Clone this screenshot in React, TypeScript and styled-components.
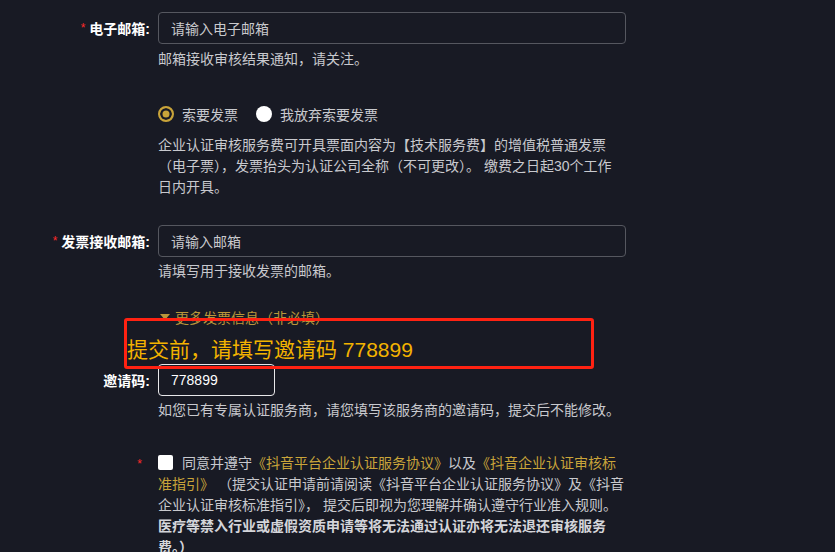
import styled, { createGlobalStyle } from 'styled-components'

const GlobalStyle = createGlobalStyle`
  html, body {
    margin: 0;
    padding: 0;
    background: #181a24;
  }
  body {
    font-family: "Liberation Sans", "Noto Sans CJK SC", sans-serif;
    color: #c8c9ce;
  }
`

const Page = styled.div`
  position: relative;
  width: 835px;
  height: 552px;
  overflow: hidden;
  background: #181a24;
`

const FormItem = styled.div<{ $top: number }>`
  display: grid;
  grid-template-columns: 150px 468px;
  column-gap: 8px;
  margin-top: ${p => p.$top}px;
`

const Label = styled.label<{ $h?: number }>`
  display: flex;
  align-items: center;
  justify-content: flex-end;
  height: ${p => p.$h ?? 32}px;
  font-size: 14px;
  font-weight: 700;
  color: #fff;
  white-space: nowrap;
`

const Star = styled.span<{ $gap?: number }>`
  color: #ff2a2a;
  font-size: 12px;
  font-weight: 400;
  margin-right: ${p => p.$gap ?? 4}px;
`

const Field = styled.div`
  display: flex;
  flex-direction: column;
`

const Input = styled.div<{ $w?: number; $light?: boolean }>`
  box-sizing: border-box;
  height: 32px;
  width: ${p => (p.$w ? `${p.$w}px` : '100%')};
  border: 1px solid ${p => (p.$light ? '#e8e8ea' : '#55575f')};
  border-radius: 4px;
  padding: 0 12px;
  display: flex;
  align-items: center;
  font-size: 14px;
  color: ${p => (p.$light ? '#fff' : '#c9c9cd')};
`

const Help = styled.div<{ $top?: number }>`
  margin-top: ${p => p.$top ?? 5}px;
  font-size: 14px;
  line-height: 21px;
  color: #c8c9ce;
`

const RadioRow = styled.div`
  display: flex;
  align-items: center;
  height: 21px;
  font-size: 14px;
  color: #c8c9ce;
`

const RadioOption = styled.div`
  display: flex;
  align-items: center;
  gap: 8px;
  margin-right: 18px;
`

const RadioDot = styled.span<{ $on?: boolean }>`
  box-sizing: border-box;
  width: 16px;
  height: 16px;
  border-radius: 50%;
  background: ${p => (p.$on ? '#c9a43a' : '#fff')};
  border: ${p => (p.$on ? '2px solid #c9a43a' : 'none')};
  box-shadow: ${p => (p.$on ? 'inset 0 0 0 2.5px #181a24' : 'none')};
`

const Paragraph = styled.p<{ $top: number }>`
  margin: ${p => p.$top}px 0 0;
  max-width: 460px;
  font-size: 14px;
  line-height: 21px;
  color: #c8c9ce;
`

const MoreToggle = styled.div<{ $top: number }>`
  display: flex;
  align-items: center;
  gap: 5px;
  height: 21px;
  margin-top: ${p => p.$top}px;
  font-size: 14px;
  color: #b8963a;
`

const Triangle = styled.span`
  width: 0;
  height: 0;
  margin-left: 2px;
  border-left: 5px solid transparent;
  border-right: 5px solid transparent;
  border-top: 6px solid #b8963a;
`

const Agreement = styled.p`
  margin: 0;
  font-size: 14px;
  line-height: 21px;
  color: #c8c9ce;
`

const Check = styled.span`
  display: inline-block;
  box-sizing: border-box;
  width: 15px;
  height: 15px;
  border-radius: 2px;
  background: #fff;
  vertical-align: -2px;
  margin-right: 9px;
`

const Link = styled.span`
  color: #c9a43a;
`

const Strong = styled.b`
  font-weight: 700;
  color: #d4d5da;
`

const Callout = styled.div`
  position: absolute;
  left: 124px;
  top: 318px;
  box-sizing: border-box;
  width: 470px;
  height: 51px;
  border: 3px solid #ff2212;
  border-radius: 3px;
  padding: 17px 0 0 0;
  font-size: 21px;
  line-height: 24px;
  color: #f3b300;
  white-space: nowrap;
`

export default function App() {
  return (
    <Page>
      <GlobalStyle />
      <FormItem $top={12}>
        <Label><Star>*</Star>电子邮箱:</Label>
        <Field>
          <Input>请输入电子邮箱</Input>
          <Help>邮箱接收审核结果通知，请关注。</Help>
        </Field>
      </FormItem>

      <FormItem $top={33}>
        <div />
        <Field>
          <RadioRow>
            <RadioOption><RadioDot $on />索要发票</RadioOption>
            <RadioOption><RadioDot />我放弃索要发票</RadioOption>
          </RadioRow>
          <Paragraph $top={11}>
            企业认证审核服务费可开具票面内容为【技术服务费】的增值税普通发票（电子票），发票抬头为认证公司全称（不可更改）。 缴费之日起30个工作日内开具。
          </Paragraph>
        </Field>
      </FormItem>

      <FormItem $top={27}>
        <Label><Star>*</Star>发票接收邮箱:</Label>
        <Field>
          <Input>请输入邮箱</Input>
          <Help $top={4}>请填写用于接收发票的邮箱。</Help>
          <MoreToggle $top={24}>
            <Triangle />更多发票信息（非必填）
          </MoreToggle>
        </Field>
      </FormItem>

      <FormItem $top={37}>
        <Label>邀请码:</Label>
        <Field>
          <Input $w={117} $light>778899</Input>
          <Help $top={4}>如您已有专属认证服务商，请您填写该服务商的邀请码，提交后不能修改。</Help>
        </Field>
      </FormItem>

      <FormItem $top={32}>
        <Label $h={21}><Star $gap={8}>*</Star></Label>
        <Agreement>
          <Check />同意并遵守<Link>《抖音平台企业认证服务协议》</Link>以及<Link>《抖音企业认证审核标准指引》</Link> （提交认证申请前请阅读《抖音平台企业认证服务协议》及《抖音企业认证审核标准指引》， 提交后即视为您理解并确认遵守行业准入规则。
          <br />
          <Strong>医疗等禁入行业或虚假资质申请等将无法通过认证亦将无法退还审核服务费。）</Strong>
        </Agreement>
      </FormItem>

      <Callout>提交前，请填写邀请码 778899</Callout>
    </Page>
  )
}
